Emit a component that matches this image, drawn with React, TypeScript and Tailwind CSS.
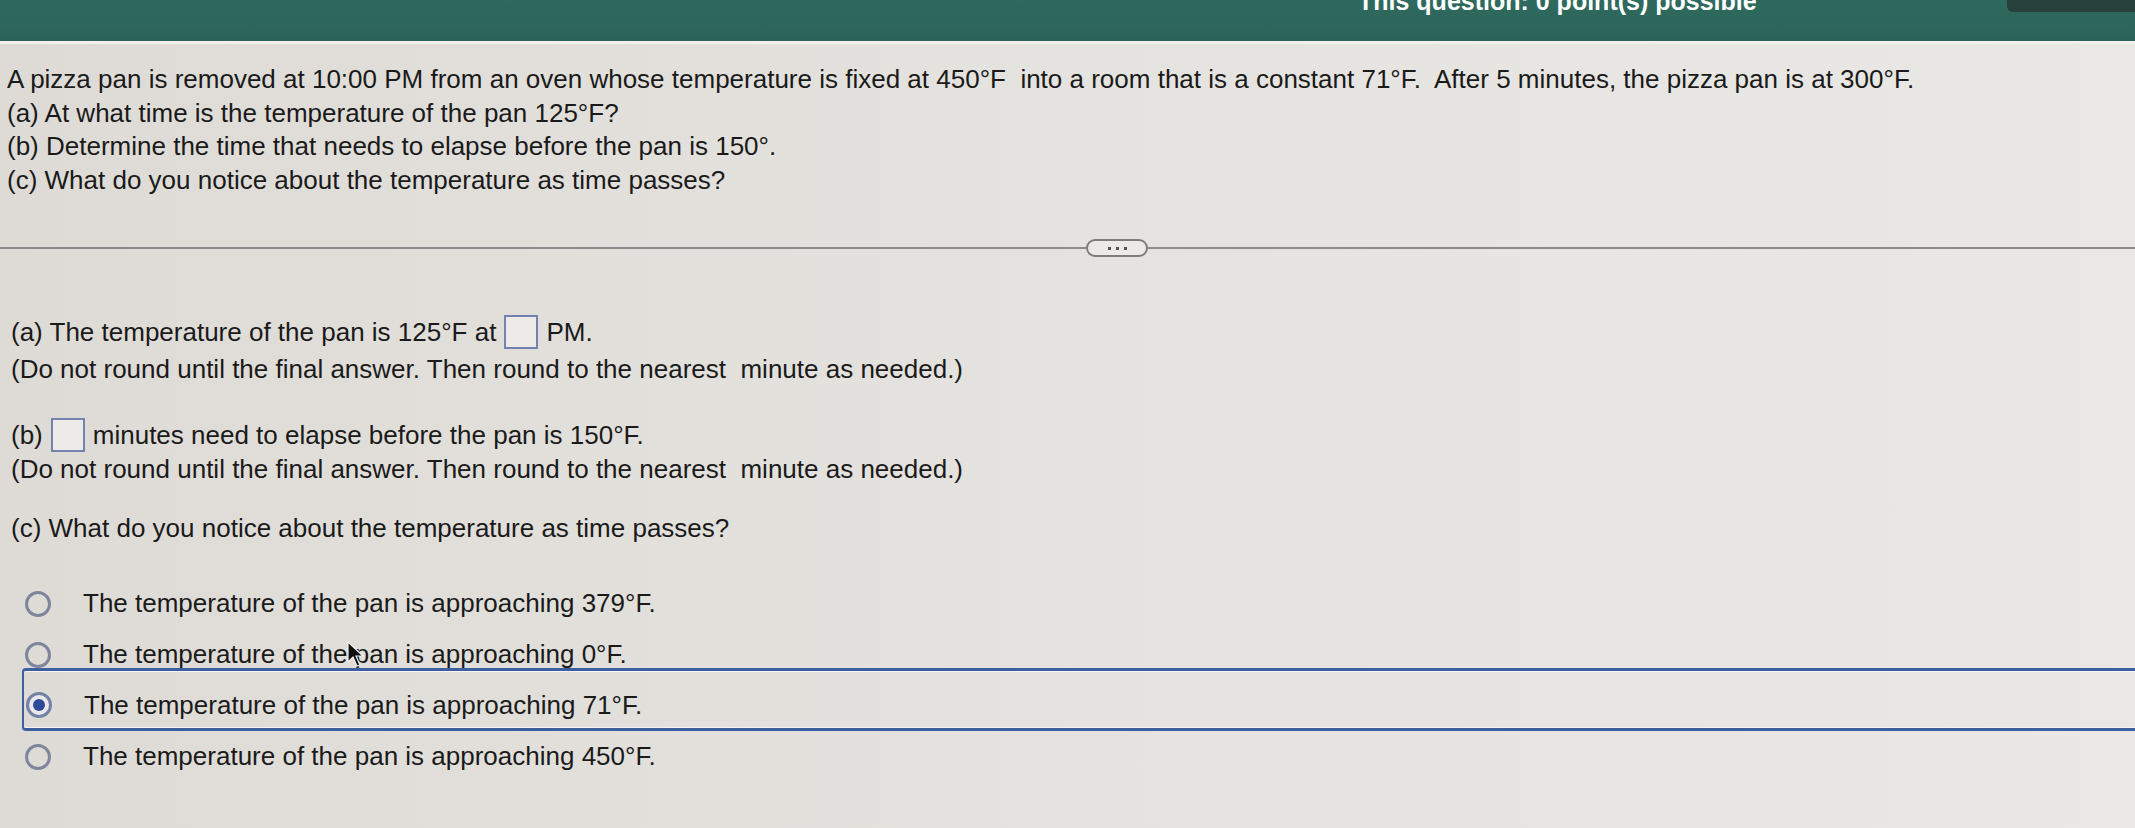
import { Fragment } from 'react'

const options = [
  { text: 'The temperature of the pan is approaching 379°F.', selected: false },
  { text: 'The temperature of the pan is approaching 0°F.', selected: false },
  { text: 'The temperature of the pan is approaching 71°F.', selected: true },
  { text: 'The temperature of the pan is approaching 450°F.', selected: false },
]

function AnswerBox() {
  return (
    <span className="mx-[8px] inline-block h-[34px] w-[34px] border-2 border-[#7383b0] bg-[#ecebe8] align-middle" />
  )
}

function Radio({ selected }: { selected: boolean }) {
  if (selected) {
    return (
      <span className="flex h-[26px] w-[26px] items-center justify-center rounded-full border-[3px] border-[#7482a6] bg-[#e9e8ec]">
        <span className="h-[12px] w-[12px] rounded-full bg-[#2d4b97]" />
      </span>
    )
  }
  return <span className="h-[26px] w-[26px] rounded-full border-[3px] border-[#7d869c]" />
}

export default function App() {
  return (
    <div
      className="relative h-[828px] w-[2135px] overflow-hidden bg-gradient-to-r from-[#dedbd6] via-[#e5e3df] to-[#e9e8e5] text-[#1a1a1a]"
      style={{ fontFamily: '"Liberation Sans", Arial, sans-serif' }}
    >
      {/* top bar */}
      <div className="relative h-[41px] overflow-hidden bg-gradient-to-b from-[#2f6a5f] to-[#2c6358]">
        <div className="absolute left-[1358px] top-[-17px] text-[25px] font-bold text-white">
          This question: 0 point(s) possible
        </div>
        <div className="absolute right-0 top-0 h-[12px] w-[128px] rounded-bl-[6px] bg-[#27403b]" />
      </div>
      <div className="h-[3px] bg-[#f1f0ec]" />

      {/* question */}
      <div className="px-[7px] pt-[19px] text-[26px] leading-[33.5px]">
        <p>
          A pizza pan is removed at 10:00 PM from an oven whose temperature is fixed at 450°F{'\u00a0'} into a room
          that is a constant 71°F.{'\u00a0'} After 5 minutes, the pizza pan is at 300°F.
        </p>
        <p>(a) At what time is the temperature of the pan 125°F?</p>
        <p>(b) Determine the time that needs to elapse before the pan is 150°.</p>
        <p>(c) What do you notice about the temperature as time passes?</p>
      </div>

      {/* divider */}
      <div className="mt-[42px] flex items-center">
        <div className="h-[2px] w-[1086px] bg-[#8b8b8b]" />
        <div className="flex h-[18px] w-[62px] items-center justify-center gap-[5px] rounded-full border-2 border-[#7d7d7d] bg-[#ebeae7]">
          <span className="h-[3px] w-[3px] bg-[#555]" />
          <span className="h-[3px] w-[3px] bg-[#555]" />
          <span className="h-[3px] w-[3px] bg-[#555]" />
        </div>
        <div className="h-[2px] flex-1 bg-[#8b8b8b]" />
      </div>

      {/* answers */}
      <div className="px-[11px] pt-[58px] text-[26px] leading-[34px]">
        <p className="flex items-center">
          (a) The temperature of the pan is 125°F at
          <AnswerBox />
          PM.
        </p>
        <p className="mt-[3px]">(Do not round until the final answer. Then round to the nearest{'\u00a0'} minute as needed.)</p>

        <p className="mt-[32px] flex items-center">
          (b)
          <AnswerBox />
          minutes need to elapse before the pan is 150°F.
        </p>
        <p>(Do not round until the final answer. Then round to the nearest{'\u00a0'} minute as needed.)</p>

        <p className="mt-[25px]">(c) What do you notice about the temperature as time passes?</p>
      </div>

      <div className="mt-[33px] flex flex-col">
        {options.map((o, i) => (
          <Fragment key={i}>
            <div
              className={
                o.selected
                  ? 'ml-[22px] -mt-[12px] flex h-[63px] items-center rounded-l-[4px] border-y-[3px] border-l-2 border-[#3d5e9f] pl-[2px] pt-[11px] text-[26px] shadow-[inset_0_1px_0_#f4f4f4,inset_0_-1px_0_#f4f4f4]'
                  : 'ml-[22px] flex h-[51px] items-center pl-[3px] text-[26px]'
              }
            >
              <Radio selected={o.selected} />
              <span className="ml-[32px]">{o.text}</span>
            </div>
          </Fragment>
        ))}
      </div>

      {/* mouse cursor */}
      <svg className="absolute left-[346px] top-[640px]" width="20" height="28" viewBox="0 0 20 28">
        <path d="M2 2 L2 22 L7 17 L11 26 L14 25 L10 16 L17 16 Z" fill="#111" stroke="#eee" strokeWidth="1.2" />
      </svg>
    </div>
  )
}
